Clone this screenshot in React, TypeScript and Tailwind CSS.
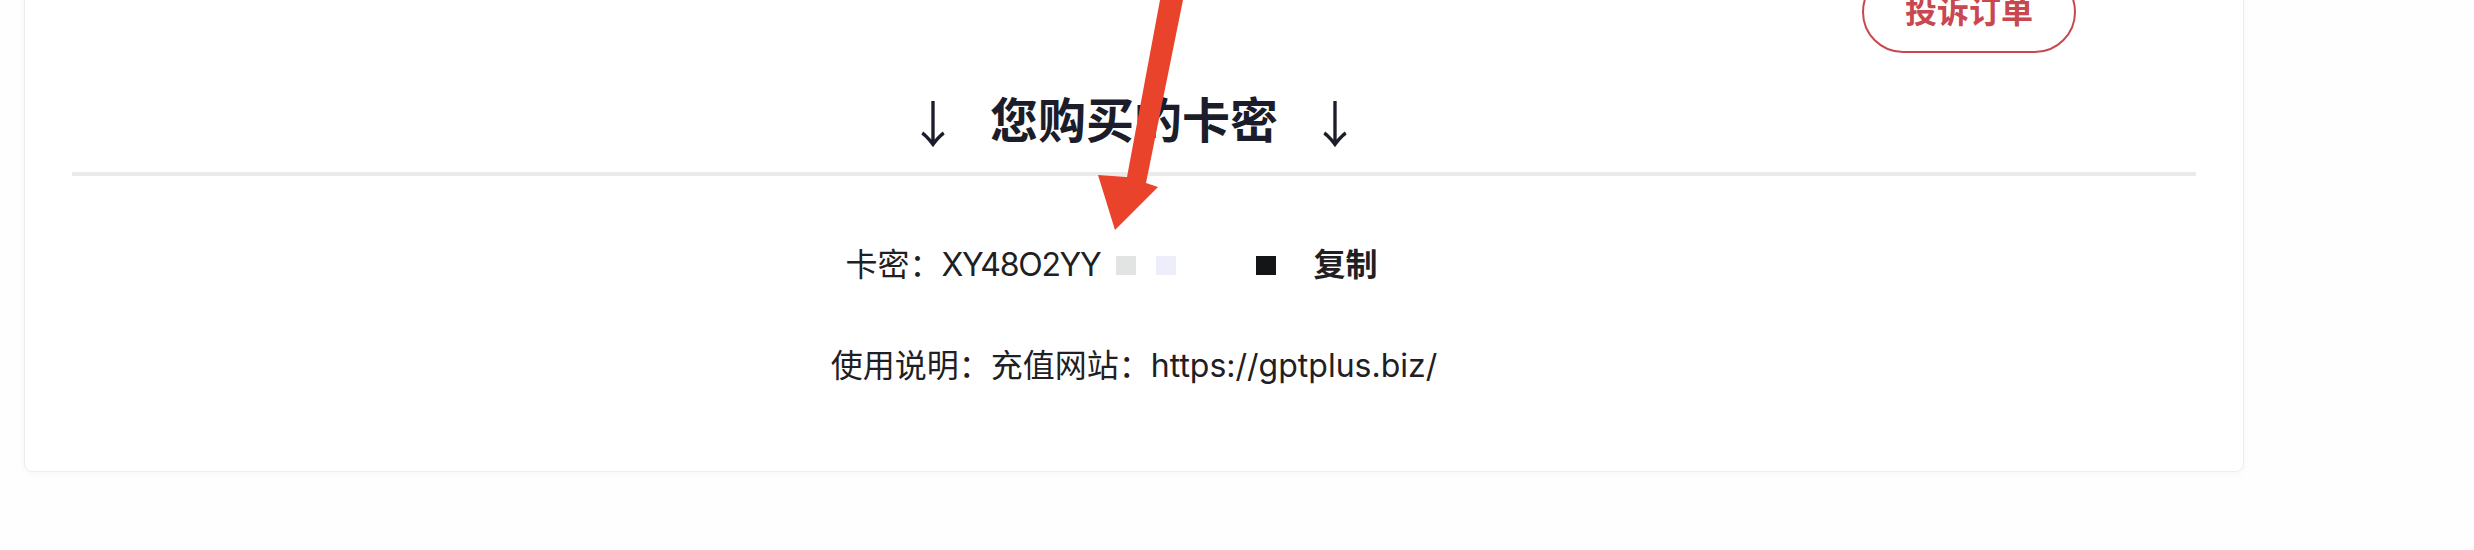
export default function App() {
  return (
    <div className="relative w-[2474px] h-[550px] overflow-hidden bg-[#fefefe] font-['Inter','Noto_Sans_CJK_SC',sans-serif]">
      {/* CARD */}
      <div className="ml-[24px] -mt-[100px] w-[2220px] rounded-[8px] border border-[#ededed] bg-white px-[47px] pb-[83px] shadow-[0_2px_6px_rgba(0,0,0,0.03)]">
        {/* ACTIONS */}
        <div className="flex justify-end pr-[120px] pt-[70px]">
          <button className="h-[82px] rounded-full border-2 border-[#c9474e] px-[41px] text-[32px] font-bold text-[#c9474e]">
            投诉订单
          </button>
        </div>

        {/* TITLE */}
        <h2 className="mt-[35px] flex items-center justify-center text-[48px] leading-[66px] font-bold text-[#1b1d2a]">
          <span className="font-['Noto_Sans_CJK_SC',sans-serif] font-normal text-[50px]">↓</span>
          <span className="mx-[32px]">您购买的卡密</span>
          <span className="font-['Noto_Sans_CJK_SC',sans-serif] font-normal text-[50px]">↓</span>
        </h2>

        <div className="mt-[18px] h-[4px] bg-[#e9eaec]" />

        {/* KEY */}
        <div className="mt-[67px] flex items-center justify-center text-[32px] leading-[44px] text-[#1f2024]">
          <span>
            卡密：<span className="tracking-[-1.3px]">XY48O2YY</span>
          </span>
          <span className="ml-[16px] h-[19px] w-[20px] bg-[#e2e3e3]" />
          <span className="ml-[20px] h-[19px] w-[20px] bg-[#eeeefa]" />
          <span className="ml-[80px] h-[19px] w-[20px] bg-[#131517]" />
          <span className="ml-[37px] font-bold">复制</span>
          <span className="w-[45px]" />
        </div>

        {/* USAGE */}
        <div className="mt-[57px] text-center text-[32px] leading-[44px] text-[#1f2024]">
          使用说明：充值网站：https://gptplus.biz/
        </div>
      </div>

      {/* ANNOTATION */}
      <svg
        className="absolute left-[1090px] top-0 h-[235px] w-[100px]"
        viewBox="0 0 100 235"
      >
        <polygon
          points="70,0 93,0 56,183 68,187 25,230 8,175 37,177"
          fill="#e9432b"
        />
      </svg>
    </div>
  );
}
